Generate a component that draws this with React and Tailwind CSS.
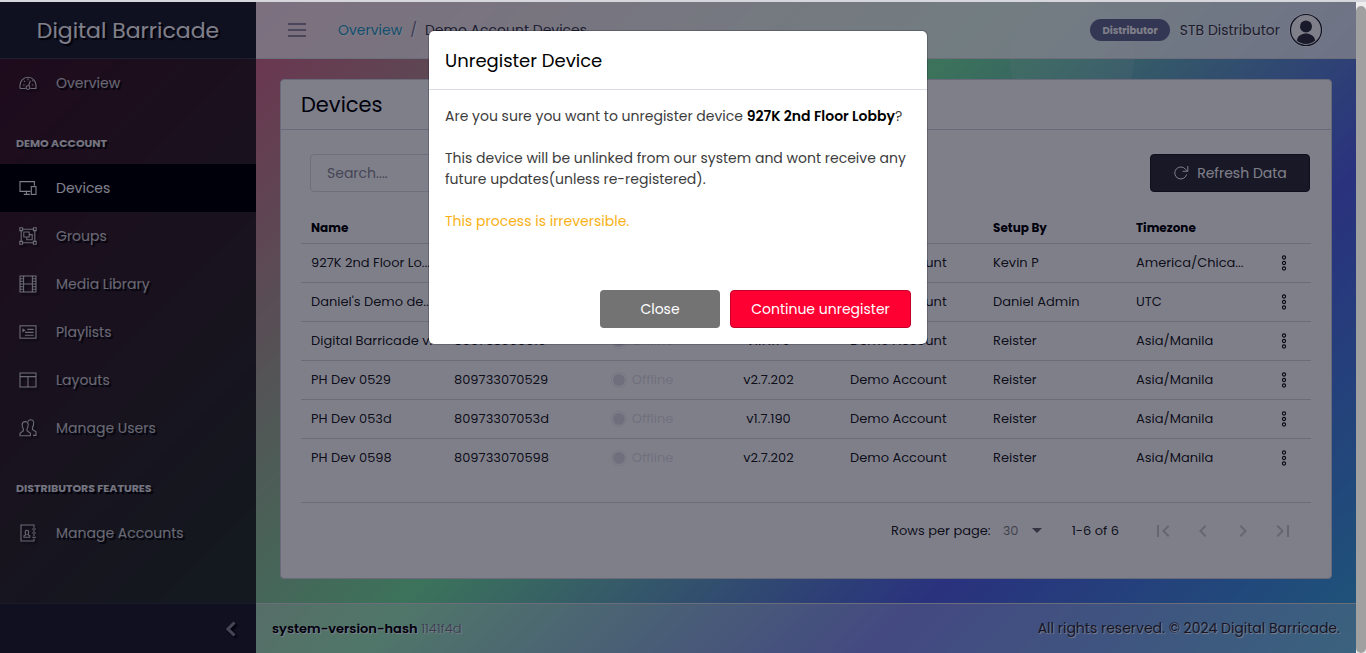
import React from 'react';

function Icon({ children }) {
  return (
    <svg viewBox="0 0 18 18" width="18" height="18" fill="none" stroke="currentColor" strokeWidth="1.1" aria-hidden="true" className="shrink-0 drop-shadow-[2px_2px_1px_rgba(0,0,0,0.9)]">
      {children}
    </svg>
  );
}

const icons = {
  speedometer: (
    <>
      <path d="M1 14.5v-3.2a8 8 0 0 1 16 0v3.2h-5.6M6.6 14.5H1" />
      <circle cx="9" cy="13.6" r="1.9" />
      <path d="M9.6 11.7 11.4 6.6M9 4.4v1.8M4 11h1.6M12.8 11h1.4M5 6.8l1.1 1.1M13.4 7.2l.8-.8" />
    </>
  ),
  devices: (
    <>
      <path d="M11.5 12.4H1V2.6h14.4v4.2" />
      <rect x="12.3" y="7.6" width="4.7" height="7.8" />
      <path d="M7.4 12.4v2.8M4.8 15.4h6" />
    </>
  ),
  group: (
    <>
      <path d="M3.6 2.2h10.8M3.6 15.8h10.8M2.2 3.6v10.8M15.8 3.6v10.8" />
      <path d="M.8.8h2.8v2.8H.8zM14.4.8h2.8v2.8h-2.8zM.8 14.4h2.8v2.8H.8zM14.4 14.4h2.8v2.8h-2.8z" />
      <path d="M4.8 5h5.4v5H4.8zM10.2 7.6h3v5.2H7.8V10" />
    </>
  ),
  film: (
    <>
      <rect x="1" y="1" width="16" height="16" />
      <path d="M4.6 1v16M13.4 1v16M4.6 9h8.8M1 3.7h3.6M1 6.3h3.6M1 9h3.6M1 11.7h3.6M1 14.3h3.6M13.4 3.7H17M13.4 6.3H17M13.4 9H17M13.4 11.7H17M13.4 14.3H17" />
    </>
  ),
  playlist: (
    <>
      <rect x="1" y="2.8" width="16" height="12.4" />
      <path d="M8.4 6.4h6.2M6 9.4h8.6M6 12.2h8.6" />
      <path d="M3.4 5.2v4.2l3.2-2.1z" fill="currentColor" stroke="none" />
    </>
  ),
  layout: (
    <>
      <rect x="1" y="2" width="16" height="14" />
      <path d="M1 5.6h16M9 5.6V16" />
    </>
  ),
  people: (
    <>
      <path d="M1 16.8v-2.6l3.4-2.4V10C3.4 9 3.2 7.6 3.2 5.6a3 3 0 0 1 6 0c0 2-.3 3.4-1.2 4.4v1.8l3.4 2.4v2.6z" />
      <path d="M9 2.4c.6-1 1.5-1.6 2.7-1.6a3 3 0 0 1 3 3.1c0 2-.3 3.3-1.2 4.3v2.2l3.5 2.5v3.5h-3" />
    </>
  ),
  contact: (
    <>
      <path d="M15 3.8V1H2v16h13v-2.6M15 6v1.8M15 10.2V12M13.2 5H17M13.2 9H17M13.2 13.2H17" />
      <path d="M5 13.2v-1.4l2-1.2c-.7-.8-.8-1.6-.8-2.7a1.7 1.7 0 0 1 3.4 0c0 1.1-.1 1.9-.8 2.7l2 1.2v1.4z" />
    </>
  ),
};

function NavItem({ icon, label, active = false }) {
  return (
    <a
      href="#"
      className={`flex h-12 items-center gap-[19px] pl-[19px] text-[14px] [text-shadow:2px_2px_1px_#000] ${active ? 'bg-black text-white' : 'text-white/80'}`}
    >
      <Icon>{icons[icon]}</Icon>
      <span>{label}</span>
    </a>
  );
}

function NavTitle({ children }) {
  return (
    <h2 className="px-4 pt-7 pb-[13px] text-[11px] leading-4 font-bold text-white/90 uppercase [text-shadow:2px_2px_1px_#000]">{children}</h2>
  );
}

function Sidebar() {
  return (
    <aside className="flex w-64 shrink-0 flex-col bg-[#0e0c0c]/80">
      <div className="flex h-[57px] shrink-0 items-center justify-center border-b border-[#3c3e46] bg-[#20222a] text-[22px] text-white [text-shadow:2px_2px_1px_#000]">
        Digital Barricade
      </div>
      <nav className="flex-1">
        <NavItem icon="speedometer" label="Overview" />
        <NavTitle>Demo Account</NavTitle>
        <NavItem icon="devices" label="Devices" active />
        <NavItem icon="group" label="Groups" />
        <NavItem icon="film" label="Media Library" />
        <NavItem icon="playlist" label="Playlists" />
        <NavItem icon="layout" label="Layouts" />
        <NavItem icon="people" label="Manage Users" />
        <NavTitle>Distributors Features</NavTitle>
        <NavItem icon="contact" label="Manage Accounts" />
      </nav>
      <button aria-label="Collapse sidebar" className="flex h-[50px] items-center justify-end border-t border-[#34363c] bg-[#20202a] pr-4 text-[#8a8a96]">
        <svg viewBox="0 0 18 18" width="18" height="18" fill="none" stroke="currentColor" strokeWidth="3" className="drop-shadow-[2px_2px_1px_#000]" aria-hidden="true">
          <path d="M12.5 2.5 6 9l6.5 6.5" />
        </svg>
      </button>
    </aside>
  );
}

function Header() {
  return (
    <header className="relative flex h-[57px] shrink-0 items-center border-b border-[#d8dbe0] bg-white/80 pr-[33px] pl-8 text-[14px]">
      <button aria-label="Toggle menu" className="text-[#777283]">
        <svg viewBox="0 0 18 16" width="18" height="16" stroke="currentColor" strokeWidth="1.5" aria-hidden="true">
          <path d="M0 2h18M0 8h18M0 14h18" />
        </svg>
      </button>
      <nav aria-label="Breadcrumb" className="ml-8 flex flex-1 gap-2 [text-shadow:1px_1px_1px_#fff]">
        <a href="#" className="text-[#2b9cbf]">Overview</a>
        <span className="text-[#77778a]">/</span>
        <span className="text-[#3c3c48]">Demo Account Devices</span>
      </nav>
      <span className="flex h-[22px] items-center rounded-full bg-[#686e90] px-3 text-[10px] font-bold text-white">Distributor</span>
      <span className="ml-[10px] text-[#3c3c48] [text-shadow:1px_1px_1px_#fff]">STB Distributor</span>
      <svg viewBox="0 0 34 34" width="34" height="34" className="ml-[9px]" aria-hidden="true">
        <circle cx="17" cy="17" r="16.8" fill="#fff" />
        <circle cx="17" cy="17" r="15.5" fill="none" stroke="#1b2230" strokeWidth="1.2" />
        <circle cx="17" cy="13.5" r="6" fill="#303440" />
        <path d="M7.8 27.5c1-5 5-7 9.2-7s8.200 2 9.200 7c-2.500 2.200-5.600 3.400-9.200 3.400s-6.700-1.200-9.200-3.400z" fill="#303440" />
      </svg>
    </header>
  );
}

const rows = [
  ['927K 2nd Floor Lo...', '809733060321', 'v2.7.202', 'Kevin P', 'America/Chica...'],
  ["Daniel's Demo de...", '809733060442', 'v2.7.202', 'Daniel Admin', 'UTC'],
  ['Digital Barricade v.', '809733060910', 'v1.7.175', 'Reister', 'Asia/Manila'],
  ['PH Dev 0529', '809733070529', 'v2.7.202', 'Reister', 'Asia/Manila'],
  ['PH Dev 053d', '80973307053d', 'v1.7.190', 'Reister', 'Asia/Manila'],
  ['PH Dev 0598', '809733070598', 'v2.7.202', 'Reister', 'Asia/Manila'],
];

function DeviceTable() {
  return (
    <table className="mt-[21px] w-full table-fixed text-left text-[13px] text-black/90">
      <colgroup>
        <col />
        <col />
        <col className="w-[110px]" />
        <col />
        <col />
        <col />
        <col />
        <col className="w-[42px]" />
      </colgroup>
      <thead>
        <tr className="h-[30px] border-b border-black/15 text-[12px] text-black">
          <th className="px-[10px] font-bold">Name</th>
          <th className="px-[10px] font-bold">Device ID</th>
          <th className="px-[10px] text-center font-bold">Status</th>
          <th className="px-[10px] text-center font-bold">Version</th>
          <th className="px-[10px] font-bold">Account</th>
          <th className="px-[10px] font-bold">Setup By</th>
          <th className="px-[10px] font-bold">Timezone</th>
          <th aria-label="Actions" />
        </tr>
      </thead>
      <tbody>
        {rows.map(([name, id, version, by, zone]) => (
          <tr key={name} className="h-[39px] border-b border-black/15 whitespace-nowrap last:border-b-0">
            <td className="pl-[10px]">{name}</td>
            <td className="px-[10px]">{id}</td>
            <td>
              <span className="flex items-center justify-center gap-[5px] text-[#dfdfe4]">
                <span className="m-[2px] size-3 rounded-full bg-[#dfdfe4] ring-1 ring-[#f0f0f2] ring-offset-1" />
                Offline
              </span>
            </td>
            <td className="text-center">{version}</td>
            <td className="px-[10px]">Demo Account</td>
            <td className="px-[10px]">{by}</td>
            <td className="pl-[10px]">{zone}</td>
            <td>
              <button aria-label={`Actions for ${name}`} className="ml-[10px] block">
                <svg viewBox="0 0 10 18" width="10" height="18" fill="none" stroke="#111" strokeWidth="1.1" aria-hidden="true">
                  <circle cx="5" cy="3.5" r="1.6" />
                  <circle cx="5" cy="9" r="1.6" />
                  <circle cx="5" cy="14.5" r="1.6" />
                </svg>
              </button>
            </td>
          </tr>
        ))}
      </tbody>
    </table>
  );
}

function PageButton({ label, d }) {
  return (
    <button aria-label={label} className="flex size-10 items-center justify-center text-black/20">
      <svg viewBox="0 0 24 24" width="24" height="24" fill="currentColor" aria-hidden="true">
        <path d={d} />
      </svg>
    </button>
  );
}

function Pagination() {
  return (
    <div className="mt-[25px] flex h-14 items-center justify-end border-t border-black/15 pr-2 text-[13px] text-black/90">
      <label htmlFor="rows">Rows per page:</label>
      <span className="relative ml-3 flex items-center">
        <select id="rows" defaultValue="30" className="w-[39px] appearance-none text-black/50">
          <option>30</option>
        </select>
        <svg viewBox="0 0 10 5" width="10" height="5" fill="#66666c" className="pointer-events-none absolute right-0" aria-hidden="true">
          <path d="M0 0h10L5 5z" />
        </svg>
      </span>
      <span className="mr-6 ml-[30px]">1-6 of 6</span>
      <PageButton label="First page" d="M18.41 16.59 13.82 12l4.59-4.59L17 6l-6 6 6 6zM6 6h2v12H6z" />
      <PageButton label="Previous page" d="M15.41 7.41 14 6l-6 6 6 6 1.41-1.41L10.83 12z" />
      <PageButton label="Next page" d="M10 6 8.59 7.41 13.17 12l-4.58 4.59L10 18l6-6z" />
      <PageButton label="Last page" d="M5.59 7.41 10.18 12l-4.59 4.59L7 18l6-6-6-6zM16 6h2v12h-2z" />
    </div>
  );
}

function DevicesCard() {
  return (
    <section className="relative rounded border border-[#d0d2dc] bg-white">
      <h1 className="flex h-[50px] items-center border-b border-[#d0d2dc] px-5 text-[21px] text-black">Devices</h1>
      <div className="px-5 pt-6 pb-5">
        <div className="flex justify-between pr-px pl-[9px]">
          <input aria-label="Search" placeholder="Search...." className="h-[38px] w-60 rounded border border-[#dcdde4] px-4 text-[14px] placeholder:text-[#8c8c96]" />
          <button className="flex h-[38px] w-40 items-center justify-center gap-2 rounded border border-[#1c1c22] bg-[#313136] text-[14px] text-white">
            <svg viewBox="0 0 16 16" width="16" height="16" fill="none" stroke="currentColor" strokeWidth="1" aria-hidden="true">
              <path d="M13.6 9.4A6 6 0 1 1 12.6 4.4L14.5 6M14.8 1v5.3H9.6" />
            </svg>
            Refresh Data
          </button>
        </div>
        <DeviceTable />
        <Pagination />
      </div>
    </section>
  );
}

function Modal() {
  return (
    <div className="absolute inset-0 flex items-start justify-center bg-[#000015]/50 pt-7">
      <div role="dialog" aria-labelledby="dialog-title" className="w-[500px] rounded-md border border-[#000015]/20 bg-white bg-clip-padding">
        <h2 id="dialog-title" className="flex h-[59px] items-center border-b border-[#d8dbe0] px-4 text-[18px] text-black">Unregister Device</h2>
        <div className="px-4 pt-4 pb-[58px] text-[14px] leading-[21px] text-[#3c3c3c]">
          <p>
            Are you sure you want to unregister device <strong className="font-semibold text-black">927K 2nd Floor Lobby</strong>?
          </p>
          <p className="mt-[21px]">This device will be unlinked from our system and wont receive any future updates(unless re-registered).</p>
          <p className="mt-[21px] text-[#f9b115]">This process is irreversible.</p>
        </div>
        <div className="flex justify-end gap-[10px] px-4 pb-4 text-[14px] text-white">
          <button className="h-[38px] w-[120px] rounded bg-[#737373]">Close</button>
          <button className="h-[38px] w-[181px] rounded border border-[#c4002b] bg-[#ff0033]">Continue unregister</button>
        </div>
      </div>
    </div>
  );
}

export default function App() {
  return (
    <div className="flex min-h-screen flex-col bg-[#d5d7dc] pt-[2px] font-[Poppins,Inter,'Noto_Sans',sans-serif]">
      <div className="flex flex-1">
        <div className="relative isolate flex flex-1 overflow-hidden bg-[linear-gradient(135deg,#ff3882_0%,#78e6a0_50%,#5464e6_76%,#3aacdc_100%)]">
          <div aria-hidden="true" className="absolute -top-1 left-[1010px] size-[124px] rounded-full bg-white/10" />
          <Sidebar />
          <div className="flex min-w-0 flex-1 flex-col">
            <Header />
            <main className="flex-1 px-6 pt-5 pb-6">
              <DevicesCard />
            </main>
            <footer className="flex h-[50px] shrink-0 items-center justify-between border-t border-[#d8dbe0] bg-white/30 px-4 [text-shadow:1px_1px_1px_#fff]">
              <span className="text-[13px] font-light text-[#777788]">
                <strong className="font-semibold text-black">system-version-hash</strong> 1141f4d
              </span>
              <span className="text-[14px] text-[#2c2c38]">All rights reserved. © 2024 Digital Barricade.</span>
            </footer>
          </div>
          <Modal />
        </div>
        <div aria-hidden="true" className="w-[10px] bg-[#eeeeee] pt-1">
          <div className="h-full rounded-full bg-[#a0a0a0]" />
        </div>
      </div>
    </div>
  );
}
